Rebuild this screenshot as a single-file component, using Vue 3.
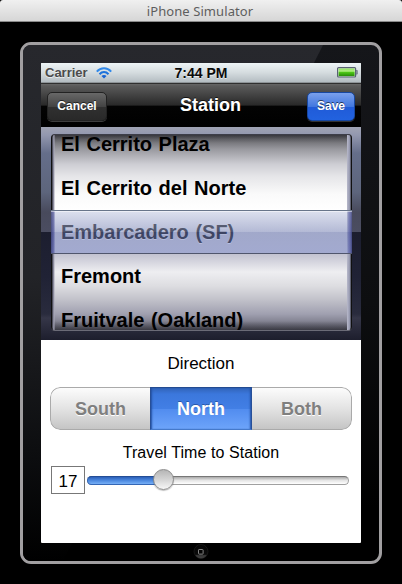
<script setup>
import { ref } from 'vue'

const stations = ['El Cerrito Plaza', 'El Cerrito del Norte', 'Embarcadero (SF)', 'Fremont', 'Fruitvale (Oakland)']
const selected = 2
const directions = ['South', 'North', 'Both']
const direction = ref('North')
const minutes = ref(17)
</script>

<template>
  <div class="window">
    <header class="titlebar">iPhone Simulator</header>
    <div class="device">
      <svg class="glare" width="356" height="516" viewBox="0 0 356 516">
        <defs>
          <linearGradient id="shine" x1="0" y1="0" x2="0" y2="1">
            <stop offset="0" stop-color="#27282d" />
            <stop offset=".45" stop-color="#222327" />
            <stop offset=".8" stop-color="#0c0d0f" />
            <stop offset="1" stop-color="#000" />
          </linearGradient>
        </defs>
        <path d="M0 0H300L40 516H0Z" fill="url(#shine)" />
      </svg>
      <main class="screen">
        <div class="status">
          <div class="carrier">
            <span>Carrier</span>
            <svg width="16" height="12" viewBox="0 0 16 12">
              <g fill="none" stroke="#1e73dc" stroke-width="2">
                <path d="M.8 4.6C4.8.2 11.2.2 15.2 4.6" stroke="#3289e8" />
                <path d="M3.5 7.2C6.1 4.4 9.9 4.4 12.5 7.2" />
              </g>
              <path d="M5.5 9C7 7.5 9 7.5 10.5 9L8 11.6Z" fill="#1762d2" />
            </svg>
          </div>
          <span class="clock">7:44 PM</span>
          <svg class="battery" width="22" height="12" viewBox="0 0 22 12">
            <defs>
              <linearGradient id="charge" x1="0" y1="0" x2="0" y2="1">
                <stop offset="0" stop-color="#8bdc5e" />
                <stop offset=".35" stop-color="#b3f184" />
                <stop offset=".5" stop-color="#4fc817" />
                <stop offset="1" stop-color="#278b08" />
              </linearGradient>
            </defs>
            <rect x="1.6" y=".6" width="18" height="9.4" rx="1" fill="#dce7d8" stroke="#586073" stroke-width="1.2" />
            <rect x="2.6" y="1.5" width="16" height="7.6" fill="url(#charge)" />
            <path d="M20.1 3.5H21.3V7.1H20.1Z" fill="#a8afba" stroke="#626a7b" stroke-width=".7" />
          </svg>
        </div>
        <nav class="navbar">
          <button class="btn cancel">Cancel</button>
          <h1>Station</h1>
          <button class="btn save">Save</button>
        </nav>
        <section class="picker">
          <div class="wheel">
            <div class="rows">
              <div v-for="(s, i) in stations" :key="s" class="row" :class="{ chosen: i === selected }">{{ s }}</div>
            </div>
            <div class="shade"></div>
            <div class="band"></div>
          </div>
        </section>
        <section class="form">
          <div class="label direction">Direction</div>
          <div class="segments">
            <button v-for="d in directions" :key="d" :class="{ on: d === direction }" @click="direction = d">{{ d }}</button>
          </div>
          <div class="label travel">Travel Time to Station</div>
          <div class="time">
            <div class="value">{{ minutes }}</div>
            <div class="track">
              <div class="fill" :style="{ width: minutes * 4.5 + 'px' }"></div>
              <div class="thumb" :style="{ left: minutes * 3.824 + 'px' }"></div>
            </div>
          </div>
        </section>
      </main>
      <div class="homebar">
        <svg width="16" height="16" viewBox="0 0 16 16">
          <defs>
            <linearGradient id="home" x1="0" y1="0" x2="0" y2="1">
              <stop offset="0" stop-color="#050505" />
              <stop offset=".7" stop-color="#090909" />
              <stop offset=".78" stop-color="#333" />
              <stop offset="1" stop-color="#484848" />
            </linearGradient>
          </defs>
          <circle cx="8" cy="7.5" r="7" fill="url(#home)" />
          <circle cx="8" cy="7.5" r="7" fill="none" stroke="#222" stroke-width=".6" />
          <rect x="5.5" y="5.5" width="4.6" height="4.6" rx=".6" fill="#050505" stroke="#858585" stroke-width="1" />
        </svg>
      </div>
    </div>
  </div>
</template>

<style>
body { background: #000; overflow: hidden; }
</style>

<style scoped>
* { box-sizing: border-box; }
.window {
  width: 402px; height: 584px; background: #000;
  display: flex; flex-direction: column; align-items: center;
  font-family: "Liberation Sans", Arial, sans-serif;
}
.titlebar {
  width: 402px; height: 22px; flex: none; padding-right: 2px;
  border-radius: 3px 3px 0 0; border-bottom: 1px solid #8a8a8a;
  background: linear-gradient(#f0f0f0, #d6d6d6);
  color: #5e5e5e; font: 13px/22px "Noto Sans", sans-serif; text-align: center; letter-spacing: .08px;
}
.device {
  position: relative; width: 362px; height: 522px; margin-top: 20px;
  border: 3px solid #a19fa1; border-radius: 11px; overflow: hidden;
  background: linear-gradient(#15161a, #0d0e10 50%, #000 90%);
  display: flex; flex-direction: column; align-items: center;
  padding-top: 18px;
}
.glare { position: absolute; left: 0; top: 0; }
.screen {
  position: relative; width: 320px; height: 480px; flex: none;
  display: flex; flex-direction: column; background: #fff;
  border-radius: 1px; overflow: hidden;
}
.status {
  height: 20px; flex: none; padding: 0 3px 0 4px;
  display: grid; grid-template-columns: 1fr auto 1fr; align-items: center;
  background: linear-gradient(#edf4f6, #d5dcdf 50%, #b4bdc2);
  border-bottom: 1px solid #8e9498;
  font-weight: bold; text-shadow: 0 1px 0 rgba(255, 255, 255, .6);
}
.carrier { display: flex; align-items: center; gap: 8px; font-size: 13px; color: #4b4b4b; }
.clock { font-size: 14px; color: #0a0a0a; padding-right: 1px; }
.battery { justify-self: end; }
.navbar {
  height: 44px; flex: none; padding: 2px 6px 0;
  display: flex; align-items: center; justify-content: space-between;
  background: linear-gradient(#303030 0, #303030 1px, #666 1px, #5a5a5a 3px, #292929 50%, #030303 53%, #000);
  color: #fff;
}
.navbar h1 {
  flex: 1; margin: 0; padding: 0 0 2px 7px; text-align: center;
  font-size: 18px; line-height: 22px; text-shadow: 0 -1px 0 rgba(0, 0, 0, .7);
}
.btn {
  height: 29px; padding: 0 0 1px; border-radius: 5px;
  font: bold 12px "Liberation Sans", Arial, sans-serif; color: #fff;
  text-shadow: 0 -1px 0 rgba(0, 0, 0, .6);
}
.cancel {
  width: 60px; border: 1px solid #222;
  background: linear-gradient(#686868, #444 50%, #303030 52%, #292929);
  box-shadow: 0 1px 0 #3d3d3d;
}
.save {
  width: 48px; border: 1px solid #1747a0;
  background: linear-gradient(#7aa0ec, #4278df 50%, #205bd8 52%, #2262df);
  box-shadow: 0 1px 0 #333;
}
.picker {
  height: 213px; flex: none; padding: 7px 9px 0 10px;
  background: linear-gradient(#a0a4b4 0, #9398af 8px, #656e8a 26px, #5d657c 65px, #484a5c 85px, #4b4d61 105px, #1c1e2f 105px, #202235 150px, #292b3d 187px, #353648 191px, #1d1e2d 213px);
}
.wheel {
  position: relative; width: 301px; height: 197px; overflow: hidden;
  border-radius: 4px;
  background: linear-gradient(#3b3b40 0, #66666b 5px, #98989e 15px, #cdcdd3 30px, #e5e5e8 42px, #fafafa 60px, #fff 76px, #c2c2d0 120px, #eeeef1 138px, #dddde1 152px, #c3c3cb 165px, #a0a0b0 180px, #858594 187px, #3f3f48 197px);
}
.rows { margin-top: -12px; }
.row {
  height: 44px; padding-left: 10px; font-size: 20px; line-height: 44px;
  font-weight: bold; color: #000; white-space: nowrap; word-spacing: 1px;
}
.row.chosen { text-shadow: 0 1px 0 #fff; }
.shade {
  position: absolute; inset: 0; border-radius: 4px;
  border: 1px solid #111; border-top-color: #3d3e49; border-bottom-color: #6b6b77;
  background:
    linear-gradient(90deg, #32323e, #a9a9bc 2px, transparent 3px, transparent 295px, #b8b9cb 295px, #9194ab 298px, #30313c 299px),
    linear-gradient(rgba(10, 10, 18, .2), transparent 8px, transparent 186px, rgba(10, 10, 18, .2));
}
.band {
  position: absolute; left: 0; right: 0; top: 76px; height: 44px;
  border-top: 1px solid #68758a; border-bottom: 1px solid #50566d;
  background:
    linear-gradient(90deg, rgba(72, 77, 158, .5) 3px, transparent 4px, transparent 296px, rgba(72, 77, 158, .5) 298px),
    linear-gradient(rgba(193, 200, 225, .55), rgba(142, 153, 198, .55) 21px, rgba(109, 122, 178, .55) 21px, rgba(136, 149, 207, .55));
  box-shadow: inset 0 1px 0 rgba(255, 255, 255, .5);
}
.form { flex: 1; display: flex; flex-direction: column; align-items: center; }
.label { color: #000; text-align: center; }
.direction { margin-top: 14px; height: 20px; font-size: 17px; line-height: 20px; }
.segments {
  width: 302px; height: 43px; margin-top: 13px;
  display: grid; grid-template-columns: 100px 102px 100px;
  border-radius: 10px; overflow: hidden;
}
.segments button {
  border: 1px solid #aaa; padding: 1px 0 0;
  font: bold 18px "Liberation Sans", Arial, sans-serif; color: #7f7f7f;
  background: linear-gradient(#fcfcfc, #e3e3e3 50%, #c5c5c5);
  text-shadow: 0 1px 0 #fff;
}
.segments button:first-child { border-right: 0; border-radius: 10px 0 0 10px; }
.segments button:last-child { border-left: 0; border-radius: 0 10px 10px 0; }
.segments .on {
  color: #fff; border-color: #234b91 #274f98 #4579ca;
  background: linear-gradient(#3163b8, #3b77dc 6px, #427fe5 50%, #518cef 51%, #6da4fa);
  box-shadow: inset 2px 0 2px -1px #2251a3, inset -2px 0 2px -1px #2251a3;
  text-shadow: 0 -1px 0 rgba(20, 50, 110, .5);
}
.travel { margin-top: 13px; height: 20px; font-size: 16px; line-height: 20px; letter-spacing: .07px; }
.time { width: 320px; padding: 3px 12px 0 10px; display: flex; align-items: center; gap: 2px; }
.value {
  width: 34px; height: 28px; border: 1px solid #777;
  font-size: 17px; line-height: 29px; text-align: center;
}
.track {
  position: relative; flex: 1; height: 9px; border-radius: 5px;
  border: 1px solid #a0a0a0; border-top-color: #777;
  background: linear-gradient(#a9a9a9, #e6e6e6 50%, #fff);
}
.fill {
  height: 9px; margin: -1px; border-radius: 5px;
  border: 1px solid #3467b6; border-top-color: #244e96;
  background: linear-gradient(#2b5fb8, #4d89df 50%, #77b0f7);
}
.thumb {
  position: absolute; top: -8px; width: 21px; height: 21px; border-radius: 50%;
  border: 1px solid #8b8b8b;
  background: linear-gradient(#b5b5b5, #d4d4d4 50%, #f7f7f7);
  box-shadow: 0 1px 1px rgba(0, 0, 0, .25);
}
.homebar { position: relative; height: 16px; margin-top: 1px; display: flex; }
</style>
